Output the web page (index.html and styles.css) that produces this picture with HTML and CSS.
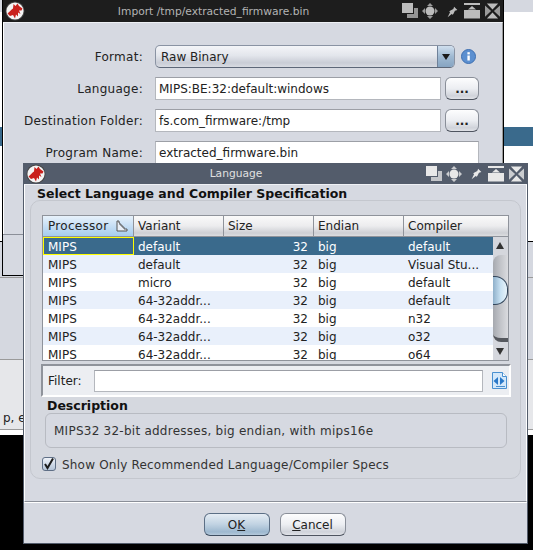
FILE: index.html
```html
<!DOCTYPE html>
<html lang="en">
<head>
    <meta charset="UTF-8">
    <meta name="viewport" content="width=device-width, initial-scale=1.0">
    <title>Language</title>
    <link rel="stylesheet" href="styles.css">
</head>
<body>
    <svg class="defs" width="0" height="0">
        <symbol id="logo" viewBox="0 0 20 20">
            <circle cx="10" cy="10" r="9.5" fill="#444"/>
            <circle cx="10" cy="10" r="8.600" fill="#f4f4f4"/>
            <path d="M2.500 12.500 C5 10.500 6 8.500 8 7.500 L8.500 3 L10.500 5 L12.500 2.500 L14 5 L17.500 7.500 L16.500 9.500 L14 9.500 L15.500 13 L13 11.500 L13 15.500 L11 13.500 L10 17.500 L8 14 L5 15 Z" fill="#c9201c"/>
        </symbol>
        <symbol id="btn-snap" viewBox="0 0 16 16">
            <rect x="0" y="0" width="11" height="10" fill="currentColor"/>
            <path d="M12 5h4v10H5v-4h7z" fill="currentColor" opacity=".75"/>
        </symbol>
        <symbol id="btn-move" viewBox="0 0 16 16">
            <circle cx="8" cy="8" r="4.500" fill="currentColor"/>
            <path d="M8 0l3 3H5zM8 16l-3-3h6zM0 8l3-3v6zM16 8l-3 3V5z" fill="currentColor" opacity=".8"/>
        </symbol>
        <symbol id="btn-pin" viewBox="0 0 16 16">
            <path d="M10 2l4 4-3 1-2 4-1 1-4-4 1-1 4-2zM5 9l2 2-5 4z" fill="currentColor"/>
        </symbol>
        <symbol id="btn-top" viewBox="0 0 18 16">
            <rect x="1" y="0" width="16" height="2" fill="currentColor"/>
            <path d="M9 3l4 3.500H5z" fill="currentColor"/>
            <rect x="1" y="7" width="16" height="8.500" fill="currentColor"/>
        </symbol>
        <symbol id="btn-max" viewBox="0 0 16 16">
            <path d="M2 0h12L8 6.500zM2 16h12L8 9.500z" fill="currentColor"/>
            <path d="M0 2v12l6.500-6zM16 2v12l-6.500-6z" fill="currentColor" opacity=".8"/>
        </symbol>
    </svg>

    <div class="desktop">
        <div class="app-strip">
            <div class="strip-row strip-a"></div>
            <div class="strip-row strip-blue"></div>
            <div class="strip-row strip-b"></div>
            <div class="strip-row strip-c"></div>
            <div class="strip-row strip-d"></div>
            <div class="strip-row strip-e"><span>p, e</span></div>
            <div class="strip-row strip-white"></div>
        </div>
    </div>

    <div class="window import-window">
        <div class="titlebar titlebar-dark">
            <svg class="logo"><use href="#logo"/></svg>
            <div class="title">Import /tmp/extracted_firmware.bin</div>
            <div class="win-buttons">
                <svg><use href="#btn-snap"/></svg>
                <svg><use href="#btn-move"/></svg>
                <svg><use href="#btn-pin"/></svg>
                <svg><use href="#btn-top"/></svg>
                <svg><use href="#btn-max"/></svg>
            </div>
        </div>
        <div class="import-form">
            <label>Format:</label>
            <div class="format-row">
                <div class="combo">
                    <span class="combo-text">Raw Binary</span>
                    <span class="combo-arrow"></span>
                </div>
                <svg class="info" width="15" height="15" viewBox="0 0 15 15">
                    <circle cx="7.500" cy="7.500" r="7" fill="#5b8fd0" stroke="#3e6fb0"/>
                    <rect x="6.400" y="6.500" width="2.400" height="5" fill="#fff"/>
                    <rect x="6.400" y="3.200" width="2.400" height="2.200" fill="#fff"/>
                </svg>
            </div>
            <label>Language:</label>
            <div class="field">MIPS:BE:32:default:windows</div>
            <button class="btn btn-browse">...</button>
            <label>Destination Folder:</label>
            <div class="field">fs.com_firmware:/tmp</div>
            <button class="btn btn-browse">...</button>
            <label>Program Name:</label>
            <div class="field field-wide">extracted_firmware.bin</div>
        </div>
        <div class="dialog-footer"></div>
    </div>

    <div class="window language-window">
        <div class="titlebar titlebar-slate">
            <svg class="logo"><use href="#logo"/></svg>
            <div class="title">Language</div>
            <div class="win-buttons">
                <svg><use href="#btn-snap"/></svg>
                <svg><use href="#btn-move"/></svg>
                <svg><use href="#btn-pin"/></svg>
                <svg><use href="#btn-top"/></svg>
                <svg><use href="#btn-max"/></svg>
            </div>
        </div>
        <div class="language-body">
            <h3 class="section-title">Select Language and Compiler Specification</h3>
            <div class="spec-panel">
                <div class="table-wrap">
                    <div class="table-scroll">
                        <table class="lang-table">
                            <thead>
                                <tr>
                                    <th class="sorted">Processor
                                        <svg class="sort-icon" width="12" height="12" viewBox="0 0 12 12">
                                            <path d="M1 1v10h10v-2H8V7H6V5H4V3H3V1z" fill="#e8eef6" stroke="#555" stroke-width="1"/>
                                        </svg>
                                    </th>
                                    <th>Variant</th>
                                    <th>Size</th>
                                    <th>Endian</th>
                                    <th>Compiler</th>
                                </tr>
                            </thead>
                            <tbody>
                                <tr class="selected"><td class="focus">MIPS</td><td>default</td><td class="num">32</td><td>big</td><td>default</td></tr>
                                <tr><td>MIPS</td><td>default</td><td class="num">32</td><td>big</td><td>Visual Stu...</td></tr>
                                <tr><td>MIPS</td><td>micro</td><td class="num">32</td><td>big</td><td>default</td></tr>
                                <tr><td>MIPS</td><td>64-32addr...</td><td class="num">32</td><td>big</td><td>default</td></tr>
                                <tr><td>MIPS</td><td>64-32addr...</td><td class="num">32</td><td>big</td><td>n32</td></tr>
                                <tr><td>MIPS</td><td>64-32addr...</td><td class="num">32</td><td>big</td><td>o32</td></tr>
                                <tr><td>MIPS</td><td>64-32addr...</td><td class="num">32</td><td>big</td><td>o64</td></tr>
                            </tbody>
                        </table>
                    </div>
                    <div class="scrollbar">
                        <div class="scroll-head"></div>
                        <div class="scroll-arrow arrow-up"></div>
                        <div class="scroll-track"><div class="scroll-thumb"></div></div>
                        <div class="scroll-arrow arrow-down"></div>
                    </div>
                </div>
                <div class="filter-bar">
                    <label>Filter:</label>
                    <div class="field filter-field"></div>
                    <svg class="filter-icon" width="17" height="17" viewBox="0 0 17 17">
                        <path d="M1.500 .5h10l4 4v12h-14z" fill="#d4e8fa" stroke="#4a90d0"/>
                        <path d="M11.500 .5v4h4" fill="#fff" stroke="#4a90d0"/>
                        <path d="M7 5l-4.500 4 4.500 4zM9 5l4.500 4-4.500 4z" fill="#2a78c8"/>
                        <path d="M5 14.500h9" stroke="#4a90d0"/>
                    </svg>
                </div>
                <h4 class="desc-title">Description</h4>
                <div class="desc-box">MIPS32 32-bit addresses, big endian, with mips16e</div>
                <div class="check-row">
                    <span class="checkbox">
                        <svg width="14" height="14" viewBox="0 0 14 14"><path d="M3 7l2.500 4L11 1.500" fill="none" stroke="#1c1c1c" stroke-width="2"/></svg>
                    </span>
                    <span class="check-label">Show Only Recommended Language/Compiler Specs</span>
                </div>
            </div>
        </div>
        <div class="dialog-footer">
            <button class="btn btn-default">O<u>K</u></button>
            <button class="btn btn-cancel"><u>C</u>ancel</button>
        </div>
    </div>
</body>
</html>
```

FILE: styles.css
```css
* {
    box-sizing: border-box;
}
html, body {
    margin: 0;
    padding: 0;
}
body {
    width: 533px;
    height: 550px;
    overflow: hidden;
    position: relative;
    background: #000;
    font-family: "DejaVu Sans", sans-serif;
    font-size: 12px;
    color: #222;
}
.defs {
    position: absolute;
}

/* app behind the dialogs */
.desktop {
    position: absolute;
    left: 0;
    top: 0;
    width: 533px;
    height: 435px;
    background: #fff;
}
.app-strip {
    display: flex;
    flex-direction: column;
    height: 100%;
    border-top: 12px solid #d5d8e0;
}
.strip-a {
    height: 115px;
    background: #fff;
}
.strip-blue {
    height: 19px;
    background: #3a6a8c;
}
.strip-b {
    height: 96px;
    background: #fff;
    border-bottom: 1px solid #000;
}
.strip-c {
    height: 36px;
    background: #d5d8e0;
    border-bottom: 1px solid #9a9a9a;
}
.strip-d {
    height: 82px;
    background: #d5d8e0;
    border-bottom: 1px solid #9a9a9a;
}
.strip-e {
    height: 70px;
    background: #e6e7ea;
    border-bottom: 1px solid #9a9a9a;
    padding: 51px 0 0 3px;
}
.strip-white {
    height: 5px;
    background: #fff;
}

/* windows */
.window {
    position: absolute;
    display: flex;
    flex-direction: column;
    background: #d6d9e1;
}
.import-window {
    left: 2px;
    top: 0;
    width: 502px;
    height: 276px;
    border: 1px solid #000;
    border-top: 0;
}
.language-window {
    left: 23px;
    top: 163px;
    width: 505px;
    height: 381px;
    border: 1px solid #535c6b;
    border-top: 0;
}
.titlebar {
    position: relative;
    display: flex;
    align-items: center;
    flex-shrink: 0;
    color: #b4b4b4;
}
.titlebar-dark {
    height: 22px;
    background: #1d1d1d;
}
.titlebar-slate {
    height: 21px;
    background: #535c6b;
    color: #e0e0e0;
}
.logo {
    width: 20px;
    height: 20px;
    margin-left: 2px;
    flex-shrink: 0;
}
.title {
    flex: 1;
    text-align: center;
    font-size: 10.700px;
}
.win-buttons {
    display: flex;
    align-items: center;
    gap: 4px;
    margin-right: 3px;
    color: #bcbcbc;
}
.titlebar-slate .win-buttons {
    color: #e8e8e8;
}
.win-buttons svg {
    width: 16px;
    height: 16px;
}
.win-buttons svg:nth-child(3) {
    width: 13px;
    height: 13px;
    margin-left: 4px;
}
.win-buttons svg:nth-child(4) {
    width: 18px;
}
.win-buttons svg:nth-child(5) {
    width: 15px;
}

/* import form */
.import-form {
    display: grid;
    grid-template-columns: 151px 286px 38px;
    grid-auto-rows: 23px;
    row-gap: 9px;
    align-content: start;
    padding-top: 22px;
    border: 1px solid #fff;
    border-top: 1px solid #eef0f4;
    border-right: 1px solid #999;
    border-bottom: 0;
    flex: 1;
    align-items: center;
}
.import-form label {
    text-align: right;
    padding: 0 12px 0 0;
    letter-spacing: 0.28px;
    white-space: nowrap;
}
.format-row {
    grid-column: 2 / 4;
    display: flex;
    align-items: center;
}
.combo {
    display: flex;
    width: 300px;
    height: 23px;
    border: 1px solid #8a93a3;
    border-bottom-color: #5d6778;
    border-radius: 5px;
    background: linear-gradient(#f4f5f8, #e3e6ec 45%, #c9cdd6 80%, #d8dbe2);
    overflow: hidden;
}
.combo-text {
    flex: 1;
    padding: 4px 5px 0;
}
.combo-arrow {
    position: relative;
    width: 17px;
    background: linear-gradient(#d0dfee, #9fb9d2 50%, #86a4c2);
    border-left: 1px solid #6f8199;
}
.combo-arrow::after {
    content: "";
    position: absolute;
    left: 4px;
    top: 8px;
    border-left: 4px solid transparent;
    border-right: 4px solid transparent;
    border-top: 6px solid #1a1a1a;
}
.info {
    margin-left: 6px;
}
.field {
    height: 23px;
    line-height: 21px;
    padding: 1px 3px 0;
    background: #fff;
    border: 1px solid #b4b7bd;
    border-top-color: #9c9fa6;
    white-space: nowrap;
    overflow: hidden;
}
.field-wide {
    grid-column: 2 / 4;
    width: 324px;
}
.btn {
    font-family: inherit;
    font-size: 12px;
    color: #222;
    border: 1px solid #8a8f99;
    border-bottom-color: #4f5560;
    border-radius: 6px;
    background: linear-gradient(#fdfdfe, #eceef2 50%, #d0d3da 85%, #e0e2e7);
    padding: 0;
}
.btn-browse {
    height: 23px;
    width: 34px;
    margin-left: 4px;
    font-weight: bold;
    line-height: 14px;
}

/* language dialog */
.language-body {
    flex: 1;
    display: flex;
    flex-direction: column;
    border-left: 1px solid #fff;
    border-right: 1px solid #fff;
    border-top: 1px solid #eef0f4;
    border-bottom: 1px solid #8b8f98;
    padding: 0 5px;
}
.section-title {
    margin: 0;
    padding-left: 7px;
    height: 15px;
    line-height: 18px;
    font-size: 12.500px;
    font-weight: bold;
    color: #111;
    white-space: nowrap;
}
.spec-panel {
    height: 279px;
    border: 1px solid #c4c7ce;
    border-radius: 10px;
    background: #d5d8df;
    padding: 14px 0 0 11px;
}
.table-wrap {
    display: flex;
    width: 467px;
    height: 146px;
    border: 1px solid #8f939b;
}
.table-scroll {
    width: 451px;
    overflow: hidden;
    background: #fff;
}
.lang-table {
    border-collapse: separate;
    border-spacing: 0;
    table-layout: fixed;
    width: 451px;
}
.lang-table th {
    width: 90px;
    height: 21px;
    padding: 0 0 0 4px;
    text-align: left;
    font-weight: normal;
    background: linear-gradient(#fafafa, #ececee 50%, #cdcfd4 85%, #dcdde0);
    border-right: 1px solid #8f939b;
    border-bottom: 1px solid #8f939b;
    white-space: nowrap;
}
.lang-table th.sorted {
    width: 91px;
    padding-left: 5px;
    background: linear-gradient(#e8f2fb, #c6def4 50%, #a6cdef);
    letter-spacing: 0.3px;
}
.sort-icon {
    vertical-align: -2px;
    margin-left: 3px;
}
.lang-table td {
    height: 18px;
    padding: 1px 0 0 4px;
    white-space: nowrap;
}
.lang-table td:first-child {
    padding-left: 5px;
}
.lang-table tbody tr:nth-child(even) {
    background: #e9f0fb;
}
.lang-table tbody tr.selected {
    background: #3a6a8c;
    color: #fff;
}
.lang-table td.focus {
    border: 1px solid #ffff00;
    padding: 1px 0 0 4px;
}
.lang-table td.num {
    text-align: right;
    padding-right: 6px;
}
.scrollbar {
    position: relative;
    width: 15px;
    display: flex;
    flex-direction: column;
    background: #d5d7dd;
}
.scroll-head {
    height: 21px;
    background: linear-gradient(#fafafa, #ececee 50%, #cdcfd4 85%, #dcdde0);
    border-bottom: 1px solid #8f939b;
}
.scroll-arrow {
    position: relative;
    height: 18px;
    background: #d5d7dd;
}
.scroll-arrow::after {
    content: "";
    position: absolute;
    left: 3px;
    border-left: 4px solid transparent;
    border-right: 4px solid transparent;
}
.arrow-up::after {
    top: 5px;
    border-bottom: 7px solid #333;
}
.arrow-down::after {
    top: 6px;
    border-top: 7px solid #333;
}
.scroll-track {
    position: relative;
    flex: 1;
    background: linear-gradient(90deg, #a6a9af, #c2c4c9 50%, #dadbdf);
    border-radius: 8px 0 0 8px / 8px;
    border-bottom: 4px solid #55585e;
}
.scroll-thumb {
    position: absolute;
    top: 21px;
    left: 0;
    width: 15px;
    height: 29px;
    background: linear-gradient(90deg, #8fb0ca, #c9e2f3 55%, #e8f3fa);
    border: 1px solid #33465c;
    border-left: 0;
    border-radius: 0 13px 13px 0;
}
.filter-bar {
    display: flex;
    align-items: center;
    width: 470px;
    height: 33px;
    margin: 3px 0 0 -1px;
    padding-left: 5px;
    background: #eceef2;
    border-top: 2px solid #8f939b;
    border-left: 2px solid #8f939b;
    border-right: 2px solid #fff;
    border-bottom: 2px solid #fff;
}
.filter-bar label {
    width: 46px;
}
.filter-field {
    width: 389px;
    height: 22px;
}
.filter-icon {
    margin-left: 8px;
}
.desc-title {
    margin: 1px 0 0 5px;
    height: 14px;
    line-height: 15px;
    font-size: 12.500px;
    font-weight: bold;
    color: #111;
}
.desc-box {
    width: 462px;
    height: 35px;
    margin: 1px 0 0 3px;
    padding: 0 8px;
    line-height: 34px;
    border: 1px solid #b8bbc2;
    border-radius: 6px;
    background: #d6d9e1;
    color: #333;
    letter-spacing: 0.25px;
}
.check-row {
    display: flex;
    align-items: center;
    gap: 6px;
    margin-top: 8px;
    color: #333;
}
.check-label {
    padding-top: 2px;
    letter-spacing: 0.2px;
}
.checkbox {
    width: 14px;
    height: 14px;
    border: 1px solid #5f6f86;
    border-radius: 3px;
    background: linear-gradient(#eef2f8, #b4c4d8);
}
.checkbox svg {
    display: block;
    margin: -1px 0 0 -1px;
}
.dialog-footer {
    height: 41px;
    flex-shrink: 0;
    display: flex;
    justify-content: center;
    gap: 10px;
    padding: 10px 2px 0 0;
    border-top: 1px solid #fff;
    background: #d6d9e1;
}
.import-window .dialog-footer {
    border-top: 1px solid #8b8f98;
}
.dialog-footer .btn {
    width: 66px;
    height: 23px;
}
.btn-default {
    background: linear-gradient(#e6edf4, #c0d2e2 50%, #9db8cf 85%, #b4c8da);
    border-color: #5c6f85;
    border-bottom-color: #3d4d60;
}
```
